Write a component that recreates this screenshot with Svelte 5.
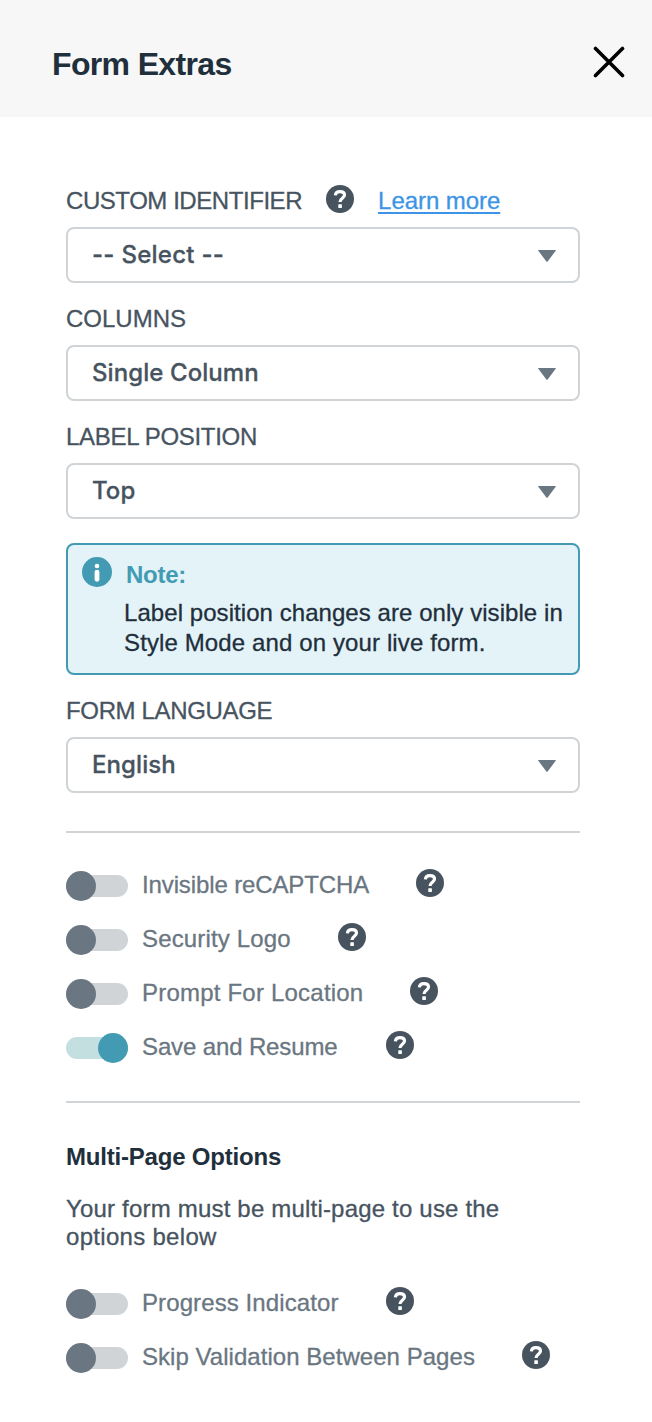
<script lang="ts">
	type Field = { id: string; label: string; value: string; help?: boolean; note?: boolean };
	type Toggle = { id: string; label: string; on: boolean };

	let fields: Field[] = [
		{ id: 'identifier', label: 'CUSTOM IDENTIFIER', value: '-- Select --', help: true },
		{ id: 'columns', label: 'COLUMNS', value: 'Single Column' },
		{ id: 'position', label: 'LABEL POSITION', value: 'Top', note: true },
		{ id: 'language', label: 'FORM LANGUAGE', value: 'English' }
	];

	let options: Toggle[] = $state([
		{ id: 'captcha', label: 'Invisible reCAPTCHA', on: false },
		{ id: 'logo', label: 'Security Logo', on: false },
		{ id: 'location', label: 'Prompt For Location', on: false },
		{ id: 'resume', label: 'Save and Resume', on: true }
	]);

	let pageOptions: Toggle[] = $state([
		{ id: 'progress', label: 'Progress Indicator', on: false },
		{ id: 'skip', label: 'Skip Validation Between Pages', on: false }
	]);
</script>

{#snippet helpIcon()}
	<svg class="help" viewBox="0 0 28 28" width="28" height="28" aria-label="Help">
		<circle cx="14" cy="14" r="14" fill="#47545f" />
		<path
			d="M9.4 10.4C9.6 7.8 11.4 6.6 14 6.6c2.7 0 4.5 1.3 4.5 3.5 0 3.2-4.5 3-4.5 6.8"
			fill="none"
			stroke="#fff"
			stroke-width="3.2"
		/>
		<rect x="12.3" y="19.2" width="3.6" height="3.7" rx="0.5" fill="#fff" />
	</svg>
{/snippet}

{#snippet toggleRow(item: Toggle)}
	<div class="toggle-row {item.id}">
		<button
			class="switch"
			class:on={item.on}
			role="switch"
			aria-checked={item.on}
			aria-label={item.label}
			onclick={() => (item.on = !item.on)}
		>
			<span class="knob"></span>
		</button>
		<span class="toggle-label">{item.label}</span>
		{@render helpIcon()}
	</div>
{/snippet}

<div class="panel">
	<header>
		<h1>Form Extras</h1>
		<button class="close" aria-label="Close">
			<svg viewBox="0 0 32 32" width="32" height="32">
				<path d="M2.5 2.5l27 27M29.5 2.5l-27 27" stroke="#000" stroke-width="3.6" stroke-linecap="round" />
			</svg>
		</button>
	</header>

	<main>
		{#each fields as field (field.id)}
			<div class="field {field.id}">
				<div class="label-row">
					<span class="label">{field.label}</span>
					{#if field.help}
						{@render helpIcon()}
						<a href="#learn">Learn more</a>
					{/if}
				</div>
				<div class="select">
					<span class="value">{field.value}</span>
					<svg class="arrow" viewBox="0 0 18 12" width="18" height="12">
						<path d="M.6 0h16.8q.8 0 .3.7L9.6 11.6q-.6.7-1.2 0L.3.7Q-.2 0 .6 0z" fill="#6a7681" />
					</svg>
				</div>
			</div>
			{#if field.note}
				<div class="note">
					<svg viewBox="0 0 30 30" width="30" height="30">
						<circle cx="15" cy="15" r="15" fill="#429bb3" />
						<circle cx="15" cy="9" r="2.3" fill="#fff" />
						<rect x="12.6" y="12.7" width="4.8" height="12" rx="2.4" fill="#fff" />
					</svg>
					<div>
						<strong>Note:</strong>
						<p>
							Label position changes are only visible in<br />
							<span class="last">Style Mode and on your live form.</span>
						</p>
					</div>
				</div>
			{/if}
		{/each}

		<hr />
		{#each options as item (item.id)}
			{@render toggleRow(item)}
		{/each}
		<hr class="second" />

		<h2>Multi-Page Options</h2>
		<p class="hint">
			Your form must be multi-page to use the<br />
			<span class="last">options below</span>
		</p>
		{#each pageOptions as item (item.id)}
			{@render toggleRow(item)}
		{/each}
	</main>
</div>

<style>
	:global(body) {
		background: #fff;
	}

	.panel {
		width: 652px;
		height: 1422px;
		overflow: hidden;
		font-family: 'Liberation Sans', Arial, sans-serif;
		font-size: 24px;
		line-height: 32px;
		color: #47545f;
		white-space: nowrap;
		-webkit-text-stroke: 0.3px;
	}

	header {
		display: flex;
		justify-content: space-between;
		box-sizing: border-box;
		height: 117px;
		padding: 46px 27px 0 52px;
		background: #f7f7f7;
	}

	h1 {
		margin: 0;
		font-size: 32px;
		line-height: 36px;
		font-weight: 700;
		letter-spacing: -0.65px;
		-webkit-text-stroke: 0;
		color: #1f2f3c;
	}

	button {
		display: block;
		padding: 0;
		border: none;
		background: none;
		cursor: pointer;
	}

	.close {
		width: 32px;
		height: 32px;
	}

	svg {
		display: block;
		flex: none;
	}

	main {
		width: 514px;
		padding: 48px 0 0 66px;
	}

	.label-row {
		display: flex;
		height: 32px;
		padding: 20px 0 10px;
	}

	.label {
		letter-spacing: -0.44px;
	}

	.columns .label {
		letter-spacing: 0;
	}

	.position .label {
		letter-spacing: -0.3px;
	}

	.language .label {
		letter-spacing: -0.35px;
	}

	.label-row .help {
		margin: 0 24px;
	}

	a {
		color: #3d94e6;
		letter-spacing: -0.06px;
		text-decoration-thickness: 2px;
		text-underline-offset: 3px;
	}

	.select {
		display: flex;
		align-items: center;
		justify-content: space-between;
		box-sizing: border-box;
		height: 56px;
		padding: 0 22px 0 24px;
		border: 2px solid #d0d4d7;
		border-radius: 8px;
	}

	.value {
		font-family: Inter, sans-serif;
		font-weight: 500;
		letter-spacing: 0.08px;
	}

	.identifier .value {
		letter-spacing: 0.27px;
	}

	.arrow {
		margin-top: 2px;
	}

	.note {
		display: flex;
		gap: 12px;
		box-sizing: border-box;
		height: 132px;
		margin-top: 24px;
		padding: 12px 14px;
		border: 2px solid #429bb3;
		border-radius: 8px;
		background: #e4f3f8;
		color: #1f2f3c;
	}

	.note strong {
		display: block;
		height: 41px;
		padding-left: 2px;
		line-height: 36px;
		font-weight: 700;
		letter-spacing: -0.25px;
		-webkit-text-stroke: 0;
		color: #429bb3;
	}

	.note p {
		margin: 0;
		line-height: 30px;
		letter-spacing: 0.06px;
	}

	.note .last {
		letter-spacing: 0.12px;
	}

	hr {
		height: 2px;
		margin: 38px 0 26px;
		border: none;
		background: #d0d4d7;
	}

	hr.second {
		margin: 26px 0 38px;
	}

	.toggle-row {
		display: flex;
		align-items: flex-start;
		height: 42px;
		padding-top: 12px;
		color: #6a7681;
	}

	.switch {
		display: flex;
		align-items: center;
		width: 62px;
		height: 22px;
		margin: 4px 14px 0 0;
		border-radius: 11px;
		background: #d0d4d7;
	}

	.knob {
		flex: none;
		width: 30px;
		height: 30px;
		border-radius: 50%;
		background: #6a7681;
	}

	.switch.on {
		justify-content: flex-end;
		background: #c3dfe0;
	}

	.on .knob {
		background: #429bb3;
	}

	.toggle-label {
		margin-top: -2px;
		margin-right: 47px;
	}

	.captcha .toggle-label {
		letter-spacing: -0.12px;
	}

	.logo .toggle-label {
		letter-spacing: 0.15px;
	}

	.location .toggle-label {
		letter-spacing: 0.21px;
	}

	.resume .toggle-label {
		margin-right: 48px;
		letter-spacing: -0.13px;
	}

	.progress .toggle-label {
		letter-spacing: 0.1px;
	}

	.skip .toggle-label {
		letter-spacing: 0.04px;
	}

	.toggle-row .help {
		margin-top: -2px;
	}

	h2 {
		margin: 0;
		font-size: 24px;
		font-weight: 700;
		letter-spacing: -0.2px;
		-webkit-text-stroke: 0;
		color: #1f2f3c;
	}

	.hint {
		margin: 22px 0 26px;
		line-height: 28px;
		letter-spacing: 0.19px;
	}

	.hint .last {
		letter-spacing: 0.3px;
	}
</style>
